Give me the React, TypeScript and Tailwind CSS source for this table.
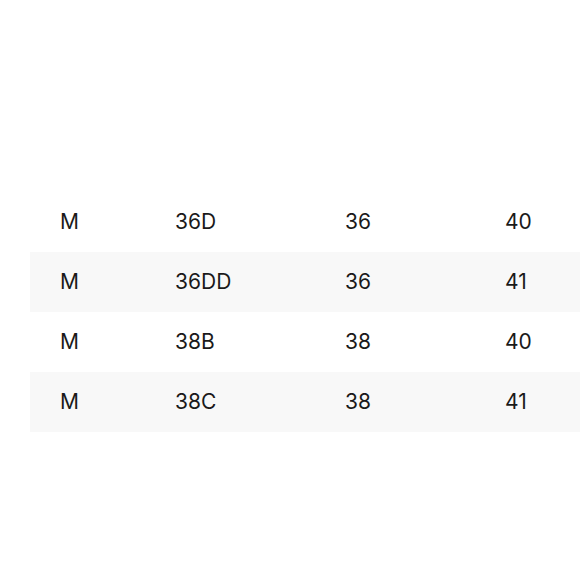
export default function App() {
  const rows = [
    ["M", "36D", "36", "40"],
    ["M", "36DD", "36", "41"],
    ["M", "38B", "38", "40"],
    ["M", "38C", "38", "41"],
  ];
  return (
    <div className="w-[580px] h-[580px] bg-white overflow-hidden pt-[192px]" style={{ fontFamily: "Inter, 'Open Sans', sans-serif" }}>
      <div className="ml-[30px]">
        {rows.map((r, i) => (
          <div
            key={i}
            className={`grid grid-cols-[115px_170px_160px_1fr] h-[60px] items-center text-[21px] text-[#1a1a1a] ${i % 2 === 1 ? "bg-[#f8f8f8]" : "bg-white"}`}
          >
            {r.map((c, j) => (
              <div key={j} className="pl-[30px] whitespace-nowrap">{c}</div>
            ))}
          </div>
        ))}
      </div>
    </div>
  );
}
